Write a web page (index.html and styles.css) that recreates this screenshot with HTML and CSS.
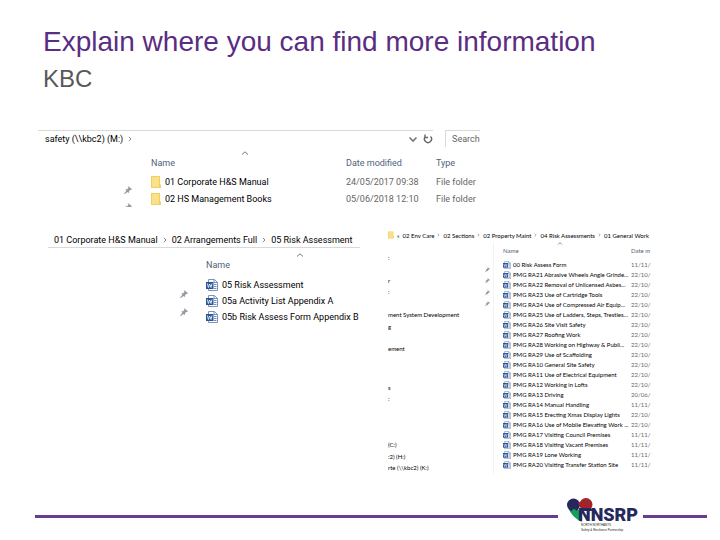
FILE: index.html
```html
<!DOCTYPE html>
<html lang="en">
<head>
    <meta charset="UTF-8">
    <meta name="viewport" content="width=device-width, initial-scale=1.0">
    <title>Explain where you can find more information</title>
    <link rel="stylesheet" href="styles.css">
</head>
<body>
    <svg class="sprite" aria-hidden="true">
        <symbol id="folder" viewBox="0 0 10 12">
            <path d="M0 0h9v8l1 1v3H0z" fill="#f0cf62"/>
            <path d="M1 1h7v10H1z" fill="#fbe08a"/>
        </symbol>
        <symbol id="word" viewBox="0 0 12 12">
            <path d="M2.500.5h6l3 3v8h-9z" fill="#fff" stroke="#8193ad"/>
            <path d="M8 .5v3h3.500M8 5.500h2.500M8 7.500h2.500M8 9.500h2.500" fill="none" stroke="#6f8fc0"/>
            <path d="M0 3h7.500v7H0z" fill="#2a5699"/>
            <path d="M1.400 4.500l1 4 1.300-3.500L5 8.500l1-4" fill="none" stroke="#fff" stroke-width=".8"/>
        </symbol>
        <symbol id="pin" viewBox="0 0 10 10">
            <path d="M5 0l5 4-1 1-1-.3L6.300 6.500 6 9 4.500 7.500 1 10 0 9.600 3 6 1.500 4.500 4 4l1.500-1.800z" fill="#929ba3"/>
        </symbol>
        <symbol id="up" viewBox="0 0 8 4">
            <path d="M1 3.500L4 .8l3 2.700" fill="none" stroke="#777"/>
        </symbol>
        <symbol id="next" viewBox="0 0 4 6">
            <path d="M.8.8L3 3 .8 5.200" fill="none" stroke="#888"/>
        </symbol>
    </svg>

    <header class="heading">
        <h1>Explain where you can find more information</h1>
        <h2>KBC</h2>
    </header>

    <main>
        <section class="explorer drive">
            <div class="bar">
                <nav class="crumbs">
                    <a href="#">safety (\\kbc2) (M:)</a><svg class="next"><use href="#next"/></svg>
                </nav>
                <div class="tools">
                    <button type="button" aria-label="Previous locations"><svg viewBox="0 0 10 10"><path d="M1.500 3.500L5 7l3.500-3.500" fill="none" stroke="#777" stroke-width="1.600"/></svg></button>
                    <button type="button" aria-label="Refresh"><svg viewBox="0 0 10 10"><path d="M2.500 2.500a3.500 3.500 0 1 0 5 0M2 .5v3h3" fill="none" stroke="#666" stroke-width="1.400"/></svg></button>
                </div>
                <input class="search" type="text" placeholder="Search" aria-label="Search">
            </div>
            <div class="pane">
                <ul class="pins">
                    <li><svg class="pin"><use href="#pin"/></svg></li>
                    <li><svg class="pin"><use href="#pin"/></svg></li>
                </ul>
                <table class="files">
                    <thead>
                        <tr><th class="name">Name<svg class="up"><use href="#up"/></svg></th><th class="date">Date modified</th><th>Type</th></tr>
                    </thead>
                    <tbody>
                        <tr><td><svg class="folder"><use href="#folder"/></svg>01 Corporate H&amp;S Manual</td><td>24/05/2017 09:38</td><td>File folder</td></tr>
                        <tr><td><svg class="folder"><use href="#folder"/></svg>02 HS Management Books</td><td>05/06/2018 12:10</td><td>File folder</td></tr>
                    </tbody>
                </table>
            </div>
        </section>

        <div class="row">
            <section class="explorer manual">
                <nav class="crumbs">
                    <a href="#">01 Corporate H&amp;S Manual</a><svg class="next"><use href="#next"/></svg>
                    <a href="#">02 Arrangements Full</a><svg class="next"><use href="#next"/></svg>
                    <a href="#">05 Risk Assessment</a>
                </nav>
                <div class="pane">
                    <ul class="pins">
                        <li><svg class="pin"><use href="#pin"/></svg></li>
                        <li><svg class="pin"><use href="#pin"/></svg></li>
                    </ul>
                    <table class="files">
                        <thead>
                            <tr><th class="name">Name<svg class="up"><use href="#up"/></svg></th></tr>
                        </thead>
                        <tbody>
                            <tr><td><svg class="word"><use href="#word"/></svg>05 Risk Assessment</td></tr>
                            <tr><td><svg class="word"><use href="#word"/></svg>05a Activity List Appendix A</td></tr>
                            <tr><td><svg class="word"><use href="#word"/></svg>05b Risk Assess Form Appendix B</td></tr>
                        </tbody>
                    </table>
                </div>
            </section>

            <section class="explorer general">
                <nav class="crumbs">
                    <svg class="folder"><use href="#folder"/></svg>
                    <span>«</span>
                    <a href="#">02 Env Care</a><svg class="next"><use href="#next"/></svg>
                    <a href="#">02 Sections</a><svg class="next"><use href="#next"/></svg>
                    <a href="#">02 Property Maint</a><svg class="next"><use href="#next"/></svg>
                    <a href="#">04 Risk Assessments</a><svg class="next"><use href="#next"/></svg>
                    <a href="#">01 General Work</a>
                </nav>
                <div class="pane">
                    <div class="tree">
                        <ul class="places">
                            <li>:</li>
                            <li><svg class="pin"><use href="#pin"/></svg></li>
                            <li>r<svg class="pin"><use href="#pin"/></svg></li>
                            <li>:<svg class="pin"><use href="#pin"/></svg></li>
                            <li><svg class="pin"><use href="#pin"/></svg></li>
                            <li>ment System Development</li>
                            <li>g</li>
                            <li></li>
                            <li>ement</li>
                            <li></li>
                            <li></li>
                        </ul>
                        <ul class="drives">
                            <li>s</li>
                            <li>:</li>
                            <li></li>
                            <li></li>
                            <li></li>
                            <li>(C:)</li>
                            <li>:2) (H:)</li>
                            <li>rte (\\kbc2) (K:)</li>
                        </ul>
                    </div>
                    <table class="files">
                        <thead>
                            <tr><th class="name">Name<svg class="up"><use href="#up"/></svg></th><th class="date">Date m</th></tr>
                        </thead>
                        <tbody>
                            <tr><td><svg class="word"><use href="#word"/></svg>00 Risk Assess Form</td><td>11/11/</td></tr>
                            <tr><td><svg class="word"><use href="#word"/></svg>PMG RA21 Abrasive Wheels Angle Grinde...</td><td>22/10/</td></tr>
                            <tr><td><svg class="word"><use href="#word"/></svg>PMG RA22 Removal of Unlicensed Asbes...</td><td>22/10/</td></tr>
                            <tr><td><svg class="word"><use href="#word"/></svg>PMG RA23 Use of Cartridge Tools</td><td>22/10/</td></tr>
                            <tr><td><svg class="word"><use href="#word"/></svg>PMG RA24 Use of Compressed Air Equip...</td><td>22/10/</td></tr>
                            <tr><td><svg class="word"><use href="#word"/></svg>PMG RA25 Use of Ladders, Steps, Trestles...</td><td>22/10/</td></tr>
                            <tr><td><svg class="word"><use href="#word"/></svg>PMG RA26 Site Visit Safety</td><td>22/10/</td></tr>
                            <tr><td><svg class="word"><use href="#word"/></svg>PMG RA27 Roofing Work</td><td>22/10/</td></tr>
                            <tr><td><svg class="word"><use href="#word"/></svg>PMG RA28 Working on Highway &amp; Publi...</td><td>22/10/</td></tr>
                            <tr><td><svg class="word"><use href="#word"/></svg>PMG RA29 Use of Scaffolding</td><td>22/10/</td></tr>
                            <tr><td><svg class="word"><use href="#word"/></svg>PMG RA10 General Site Safety</td><td>22/10/</td></tr>
                            <tr><td><svg class="word"><use href="#word"/></svg>PMG RA11 Use of Electrical Equipment</td><td>22/10/</td></tr>
                            <tr><td><svg class="word"><use href="#word"/></svg>PMG RA12 Working in Lofts</td><td>22/10/</td></tr>
                            <tr><td><svg class="word"><use href="#word"/></svg>PMG RA13 Driving</td><td>20/06/</td></tr>
                            <tr><td><svg class="word"><use href="#word"/></svg>PMG RA14 Manual Handling</td><td>11/11/</td></tr>
                            <tr><td><svg class="word"><use href="#word"/></svg>PMG RA15 Erecting Xmas Display Lights</td><td>22/10/</td></tr>
                            <tr><td><svg class="word"><use href="#word"/></svg>PMG RA16 Use of Mobile Elevating Work ...</td><td>22/10/</td></tr>
                            <tr><td><svg class="word"><use href="#word"/></svg>PMG RA17 Visiting Council Premises</td><td>11/11/</td></tr>
                            <tr><td><svg class="word"><use href="#word"/></svg>PMG RA18 Visiting Vacant Premises</td><td>11/11/</td></tr>
                            <tr><td><svg class="word"><use href="#word"/></svg>PMG RA19 Lone Working</td><td>11/11/</td></tr>
                            <tr><td><svg class="word"><use href="#word"/></svg>PMG RA20 Visiting Transfer Station Site</td><td>11/11/</td></tr>
                        </tbody>
                    </table>
                </div>
            </section>
        </div>
    </main>

    <footer class="footer">
        <hr class="rule">
        <svg class="logo" viewBox="0 0 72 36" role="img" aria-label="NNSRP">
            <path d="M3 11l11 1 2 4v8C11 22 5 17 3 11z" fill="#16a05a"/>
            <circle cx="7.500" cy="7" r="6.500" fill="#25285c"/>
            <circle cx="20" cy="6.500" r="6.500" fill="#a3222c"/>
            <path d="M13 10h12l2 3H14z" fill="#25285c"/>
            <circle cx="14" cy="5.500" r="1.800" fill="#a3222c"/>
            <circle cx="8" cy="13" r="2" fill="#16a05a"/>
            <text class="logo-name" x="12" y="23">NNSRP</text>
            <text class="logo-line" x="15" y="28">NORTH NORTHANTS</text>
            <text class="logo-line" x="15" y="33">Safety &amp; Resilience Partnership</text>
        </svg>
        <hr class="rule end">
    </footer>
</body>
</html>
```

FILE: styles.css
```css
* { box-sizing: border-box; }
body { font-family: "Liberation Sans", Arial, sans-serif; background: white; margin: 0; min-height: 100vh; display: flex; flex-direction: column; }
.sprite { display: none; }
ul { list-style: none; margin: 0; padding: 0; }

.heading { padding: 25px 43px 0; }
h1, h2 { font-weight: normal; margin: 0; }
h1 { font-size: 28px; line-height: 34px; color: #5a2d82; }
h2 { font-size: 24px; line-height: 28px; margin-top: 6px; color: #595959; }

main { padding: 37px 68px 0 38px; }
.row { display: grid; grid-template-columns: 312fr 264fr; gap: 28px; padding-left: 10px; margin-top: 26px; }

.explorer { font-family: Roboto, "Noto Sans", sans-serif; font-size: 9px; color: #000; overflow: hidden; white-space: nowrap; }
.explorer a { color: inherit; text-decoration: none; }
.crumbs { display: flex; align-items: center; gap: 5px; }
.next { width: 4px; height: 6px; flex: none; }
.pane { display: flex; }
.pins { display: flex; flex-direction: column; flex: none; }
.pin { width: 8px; height: 8px; display: block; }
.files { border-collapse: collapse; table-layout: fixed; flex: 1; min-width: 0; line-height: 12px; }
.files th, .files td { padding: 0; text-align: left; font-weight: normal; color: #666; }
.files th { color: #52627a; }
.files td:first-child { color: #000; }
.files td svg { vertical-align: top; margin-right: 4px; }
.files tr { height: 16px; }
.name { position: relative; }
.up { position: absolute; top: 0; left: 90px; width: 8px; height: 4px; }
.folder { width: 10px; height: 12px; }
.word { width: 12px; height: 12px; }

.drive { width: 72%; }
.bar { display: flex; height: 17px; }
.bar .crumbs { flex: 1; border-top: 1px solid #d9d9d9; padding-left: 7px; }
.tools { display: flex; gap: 5px; align-items: center; border-top: 1px solid #d9d9d9; }
.tools button { border: 0; background: none; padding: 0; width: 10px; height: 10px; display: flex; }
.search { width: 35px; border: 1px solid #d9d9d9; border-width: 1px 0 0 1px; padding: 0 0 0 6px; font: inherit; margin-left: 12px; }
.search::placeholder { color: #666; opacity: 1; }
.drive .pins { width: 113px; gap: 9px; height: 60px; padding: 39px 0 0 86px; overflow: hidden; }
.drive .files { margin-top: 4px; }
.drive .name { width: 195px; }
.drive .date { width: 90px; }
.drive thead tr { height: 23px; }

.manual .crumbs { padding-left: 6px; height: 15px; border-bottom: 1px solid #d9d9d9; }
.manual .pins { width: 158px; gap: 10px; padding: 42px 0 0 132px; }
.manual .files { margin-top: 5px; }
.manual thead tr { height: 24px; }

.general { font-family: Lato, "Noto Sans", sans-serif; font-size: 6px; margin-top: -5px; }
.general .crumbs { height: 14px; gap: 3px; }
.general .folder { width: 6px; height: 8px; flex: none; }
.general .next { width: 3px; height: 4px; }
.general .pin { width: 5px; height: 5px; }
.general .tree { display: flex; flex-direction: column; width: 106px; flex: none; border-right: 1px solid #f3f3f3; padding-top: 10px; gap: 4px; }
.general .tree ul { display: flex; flex-direction: column; flex: 8; }
.general .tree .places { flex: 11; }
.general .tree li { display: flex; align-items: center; flex: 1; line-height: 8px; }
.general .tree .pin { margin: 0 3px 0 auto; }
.general .files { margin: 0 0 4px 9px; line-height: 8px; }
.general .files tr { height: 10px; }
.general .files thead tr { height: 18px; }
.general .date { width: 21px; }
.general .word { width: 8px; height: 8px; margin-right: 2px; }
.general .up { left: 54px; width: 6px; height: 3px; }

.footer { display: flex; align-items: center; margin-top: auto; padding: 0 13px 6px 35px; }
.rule { flex: 1; height: 3px; margin: 0; border: 0; background: #683c90; }
.rule.end { flex: none; width: 64px; }
.logo { width: 72px; height: 36px; margin: 0 5px 0 8px; }
.logo-name { font: 900 18px Roboto, sans-serif; fill: #25285c; }
.logo-line { font: 3px "Liberation Sans", sans-serif; fill: #222; }
```
